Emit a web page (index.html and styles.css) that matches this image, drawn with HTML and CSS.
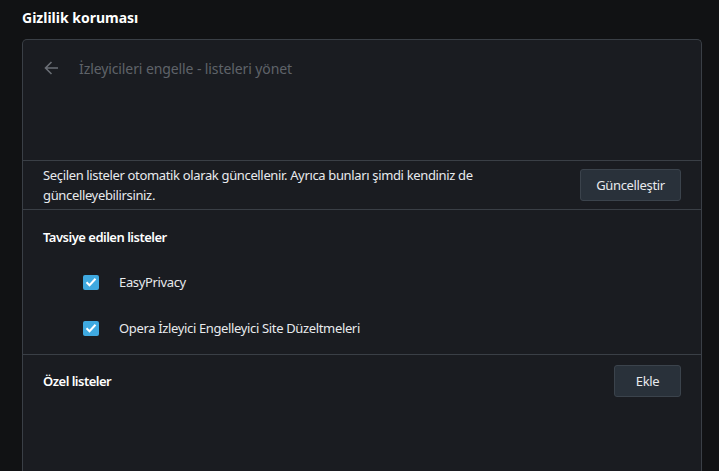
FILE: index.html
```html
<!DOCTYPE html>
<html lang="tr">
<head>
<meta charset="utf-8">
<link rel="stylesheet" href="styles.css">
</head>
<body>
<div class="page">
  <h1 class="page-title">Gizlilik koruması</h1>
  <div class="card">
    <div class="card-header">
      <svg class="back" width="16" height="16" viewBox="0 0 16 16"><path d="M15 8H2.5M8.5 2L2.5 8l6 6" fill="none" stroke="#6a6e75" stroke-width="1.6"/></svg>
      <span class="header-title">İzleyicileri engelle - listeleri yönet</span>
    </div>
    <div class="row update-row">
      <p class="desc">Seçilen listeler otomatik olarak güncellenir. Ayrıca bunları şimdi kendiniz de güncelleyebilirsiniz.</p>
      <button class="btn btn-update">Güncelleştir</button>
    </div>
    <div class="section">
      <div class="section-title">Tavsiye edilen listeler</div>
      <label class="check-row"><span class="check"><svg width="16" height="16" viewBox="0 0 16 16"><path d="M3.5 8.2l3 3 6-6.5" fill="none" stroke="#fff" stroke-width="2"/></svg></span>EasyPrivacy</label>
      <label class="check-row"><span class="check"><svg width="16" height="16" viewBox="0 0 16 16"><path d="M3.5 8.2l3 3 6-6.5" fill="none" stroke="#fff" stroke-width="2"/></svg></span>Opera İzleyici Engelleyici Site Düzeltmeleri</label>
    </div>
    <div class="row custom-row">
      <div class="section-title">Özel listeler</div>
      <button class="btn btn-add">Ekle</button>
    </div>
  </div>
</div>
</body>
</html>
```
FILE: styles.css
```css
html, body {
  margin: 0;
  padding: 0;
  background: #111214;
  height: 100%;
  overflow: hidden;
}
body {
  font-family: "Noto Sans", "Open Sans", sans-serif;
  font-size: 13px;
  letter-spacing: -0.35px;
  color: #e8eaed;
}
.page {
  padding: 0 17px 0 22px;
}
.page-title {
  margin: 0;
  font-size: 14px;
  font-weight: 700;
  letter-spacing: 0;
  color: #fff;
  line-height: 18px;
  padding-top: 9px;
  height: 39px;
  box-sizing: border-box;
}
.card {
  background: #1a1c21;
  border: 1px solid #3a3f46;
  border-bottom: none;
  border-radius: 5px 5px 0 0;
  height: 440px;
}
.card-header {
  display: flex;
  align-items: center;
  height: 56px;
  padding-left: 20px;
  margin-bottom: 64px;
}
.back {
  margin-right: 20px;
}
.header-title {
  color: #5f6369;
  font-size: 14px;
  letter-spacing: -0.1px;
}
.row {
  display: flex;
  align-items: center;
  justify-content: space-between;
  padding: 0 20px;
}
.update-row {
  border-top: 1px solid #3a3f46;
  border-bottom: 1px solid #3a3f46;
  height: 48px;
}
.desc {
  margin: 0;
  line-height: 20px;
  max-width: 450px;
}
.btn {
  font-family: inherit;
  font-size: 13px;
  letter-spacing: -0.35px;
  color: #e8eaed;
  background: #29313a;
  border: 1px solid #3b434c;
  border-radius: 3px;
  height: 32px;
  padding: 0;
  box-sizing: border-box;
}
.btn-update {
  width: 101px;
}
.btn-add {
  width: 67px;
}
.section {
  border-bottom: 1px solid #3a3f46;
  padding: 16px 20px 0;
  height: 145px;
  box-sizing: border-box;
}
.section-title {
  font-weight: 600;
  letter-spacing: -0.5px;
  line-height: 22px;
  color: #fff;
}
.section .section-title {
  margin-bottom: 11px;
}
.check-row {
  display: flex;
  align-items: center;
  height: 46px;
  padding-left: 40px;
}
.check {
  width: 16px;
  height: 15px;
  background: #3fa9e0;
  border-radius: 2px;
  margin-right: 20px;
  display: flex;
  align-items: center;
  justify-content: center;
}
.custom-row {
  height: 52px;
}
```
